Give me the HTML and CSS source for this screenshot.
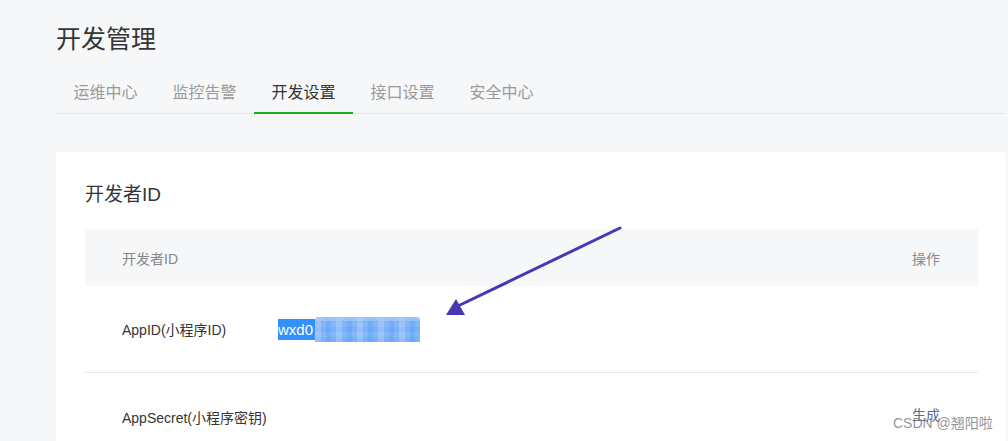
FILE: index.html
```html
<!DOCTYPE html>
<html lang="zh-CN">
<head>
<meta charset="utf-8">
<title>开发管理</title>
<link rel="stylesheet" href="styles.css">
</head>
<body>
<div class="page">
  <h1 class="page-title">开发管理</h1>
  <nav class="tabs">
    <a class="tab">运维中心</a>
    <a class="tab">监控告警</a>
    <a class="tab active">开发设置</a>
    <a class="tab">接口设置</a>
    <a class="tab">安全中心</a>
  </nav>
  <section class="card">
    <h2 class="card-title">开发者ID</h2>
    <div class="table">
      <div class="row head">
        <div class="cell label">开发者ID</div>
        <div class="cell value"></div>
        <div class="cell op">操作</div>
      </div>
      <div class="row">
        <div class="cell label">AppID(小程序ID)</div>
        <div class="cell value"><span class="sel">wxd0</span><span class="mosaic"></span></div>
        <div class="cell op"></div>
      </div>
      <div class="row">
        <div class="cell label">AppSecret(小程序密钥)</div>
        <div class="cell value"></div>
        <div class="cell op"><a class="link">生成</a></div>
      </div>
    </div>
  </section>
  <svg class="arrow" width="200" height="110" viewBox="440 215 200 110" xmlns="http://www.w3.org/2000/svg">
    <line x1="620" y1="228" x2="458" y2="306" stroke="#4338b5" stroke-width="3" stroke-linecap="round"/>
    <polygon points="446,315 456,299 465,315" fill="#4338b5"/>
  </svg>
  <div class="watermark">CSDN @翘阳啦</div>
</div>
</body>
</html>
```

FILE: styles.css
```css
* { box-sizing: border-box; }
html, body { margin: 0; padding: 0; }
body {
  background: #f6f7f9;
  font-family: "Liberation Sans", "Noto Sans CJK SC", sans-serif;
  color: #353535;
  overflow: hidden;
}
.page {
  position: relative;
  padding: 22px 2px 0 56px;
}
.page-title {
  margin: 0;
  font-size: 25px;
  line-height: 34px;
  font-weight: 400;
  color: #353535;
}
.tabs {
  display: flex;
  margin-top: 18px;
  border-bottom: 1px solid #e4e6e8;
}
.tab {
  display: block;
  padding: 0 17.5px;
  font-size: 16px;
  line-height: 38px;
  color: #9a9a9a;
  border-bottom: 2px solid transparent;
  margin-bottom: -1px;
  cursor: pointer;
}
.tab.active {
  color: #353535;
  border-bottom-color: #1aad19;
}
.card {
  margin-top: 38px;
  background: #fff;
  border-radius: 4px;
  padding: 30px 28px 0 29px;
  height: 320px;
}
.card-title {
  margin: 0;
  font-size: 19px;
  line-height: 26px;
  font-weight: 400;
  color: #353535;
}
.table {
  margin-top: 21px;
}
.row {
  display: grid;
  grid-template-columns: 193px 1fr auto;
  align-items: center;
  height: 87px;
  border-bottom: 1px solid #e7e7eb;
  font-size: 14px;
}
.row.head {
  height: 57px;
  background: #f6f7f9;
  border-bottom: none;
  color: #888;
}
.row:last-child { border-bottom: none; }
.cell.label { padding-left: 37px; }
.cell.op { padding-right: 38px; text-align: right; }
.value {
  display: flex;
  align-items: center;
}
.sel {
  background: #3390ff;
  color: #fff;
  font-size: 15px;
  line-height: 21px;
  padding-right: 2px;
}
.mosaic {
  display: inline-block;
  width: 105px;
  height: 25px;
  border-radius: 3px 3px 0 0;
  background-color: #86b8f8;
  background-image:
    linear-gradient(180deg, rgba(170,205,250,0.7) 0 4px, transparent 4px),
    repeating-linear-gradient(90deg, rgba(255,255,255,0.18) 0 6px, transparent 6px 11px, rgba(70,140,245,0.25) 11px 16px, transparent 16px 21px),
    repeating-linear-gradient(0deg, rgba(90,155,250,0.25) 0 5px, transparent 5px 10px);
}
.link {
  color: #576b95;
  cursor: pointer;
  position: relative;
  top: -3px;
}
.arrow {
  position: absolute;
  left: 440px;
  top: 215px;
}
.watermark {
  position: absolute;
  left: 893px;
  top: 413px;
  font-size: 14px;
  line-height: 20px;
  color: rgba(120,120,120,0.8);
  white-space: nowrap;
}
```
